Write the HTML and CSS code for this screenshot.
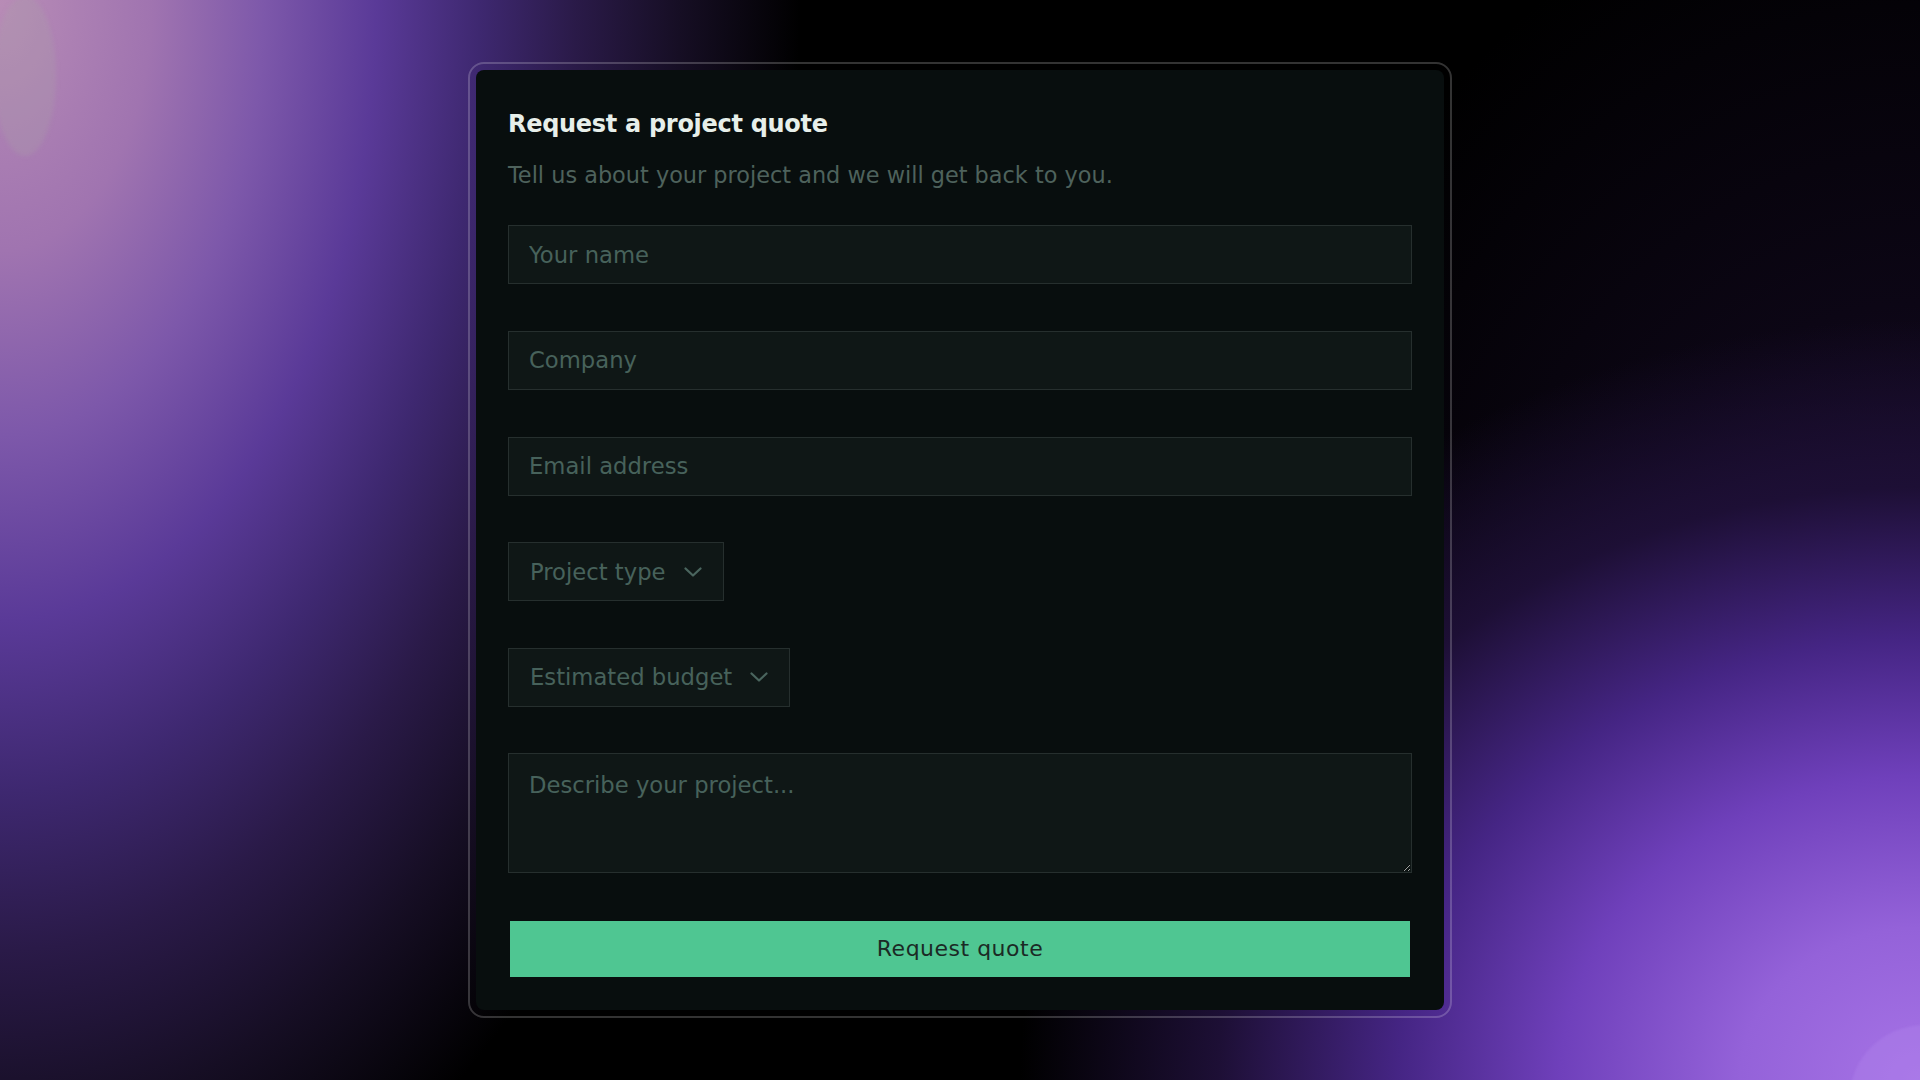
FILE: index.html
```html
<!DOCTYPE html>
<html lang="en">
<head>
<meta charset="utf-8">
<title>Request a project quote</title>
<link rel="stylesheet" href="styles.css">
</head>
<body>
<div class="bg" aria-hidden="true">
  <div class="blob blob-tl"></div>
  <div class="blob blob-br"></div>
</div>
<main class="frame">
  <section class="card">
    <h1 class="title">Request a project quote</h1>
    <p class="subtitle">Tell us about your project and we will get back to you.</p>
    <form class="form">
      <input class="field" type="text" placeholder="Your name">
      <input class="field" type="text" placeholder="Company">
      <input class="field" type="email" placeholder="Email address">
      <div class="select">
        <span>Project type</span>
        <svg class="chev" viewBox="0 0 18 10" width="18" height="10"><path d="M1.5 1.5 9 8.5 16.5 1.5" fill="none" stroke="currentColor" stroke-width="2.2" stroke-linecap="round" stroke-linejoin="round"/></svg>
      </div>
      <div class="select">
        <span>Estimated budget</span>
        <svg class="chev" viewBox="0 0 18 10" width="18" height="10"><path d="M1.5 1.5 9 8.5 16.5 1.5" fill="none" stroke="currentColor" stroke-width="2.2" stroke-linecap="round" stroke-linejoin="round"/></svg>
      </div>
      <textarea class="field area" placeholder="Describe your project..."></textarea>
      <button class="submit" type="button">Request quote</button>
    </form>
  </section>
</main>
</body>
</html>
```

FILE: styles.css
```css
* { box-sizing: border-box; }

html, body { height: 100%; }

body {
  margin: 0;
  height: 100vh;
  display: flex;
  align-items: center;
  justify-content: center;
  overflow: hidden;
  font-family: "DejaVu Sans", "Noto Sans", sans-serif;
  background-color: #000;
  background-image:
    radial-gradient(ellipse 800px 1320px at 0 0,
      #b88cb6 0%, #a074b0 19%, #7d58aa 33%, #5a3a98 47%, #3e2870 60%, #2a1a48 72%, #160e24 85%, rgba(0,0,0,0) 100%),
    radial-gradient(ellipse 900px 760px at 100% 100%,
      #a673e6 0%, #9462d9 20%, #6f40bb 40%, #452584 58%, #1d0f35 78%, rgba(0,0,0,0) 100%),
    radial-gradient(ellipse 700px 900px at 100% 70%,
      rgba(70, 36, 120, 0.45) 0%, rgba(40, 20, 70, 0.3) 50%, rgba(0,0,0,0) 100%);
}

.bg {
  position: fixed;
  inset: 0;
  overflow: hidden;
  pointer-events: none;
}

.blob {
  position: absolute;
  border-radius: 50%;
}

.blob-tl {
  left: -6px;
  top: -4px;
  width: 62px;
  height: 160px;
  background: rgba(170, 160, 170, 0.3);
  filter: blur(2px);
}

.blob-br {
  right: -80px;
  bottom: -90px;
  width: 150px;
  height: 145px;
  background: rgba(175, 130, 235, 0.4);
  filter: blur(1px);
}

.frame {
  position: relative;
  width: 984px;
  padding: 6px;
  border: 2px solid rgba(255, 255, 255, 0.2);
  border-radius: 16px;
}

.card {
  background: #080e0e;
  border-radius: 8px;
  padding: 40px 32px 33px;
}

.title {
  margin: 0;
  font-size: 24px;
  font-weight: 700;
  letter-spacing: -0.3px;
  line-height: 28px;
  color: #e7efea;
}

.subtitle {
  margin: 24.6px 0 37px;
  font-size: 22.4px;
  line-height: 25.6px;
  color: #4e625c;
}

.form {
  display: flex;
  flex-direction: column;
  align-items: flex-start;
  gap: 46.6px;
}

.field {
  display: block;
  width: 100%;
  height: 59px;
  margin: 0;
  padding: 0 20px;
  font-family: inherit;
  font-size: 22.7px;
  color: #cfd8d4;
  background: #0f1716;
  border: 1px solid #262f2e;
  border-radius: 0;
  outline: none;
}

.field::placeholder { color: #47625b; }

.area {
  height: 120px;
  padding: 18px 20px;
  line-height: 26.4px;
  resize: vertical;
}

.select {
  display: flex;
  align-items: center;
  gap: 18px;
  height: 59px;
  padding: 0 21px;
  font-size: 22.7px;
  color: #47625b;
  background: #0f1716;
  border: 1px solid #262f2e;
}

.chev { display: block; color: #4a655e; }

.submit {
  align-self: stretch;
  margin: 1px 2px 0;
  height: 56px;
  font-family: inherit;
  font-size: 22px;
  letter-spacing: 0.5px;
  color: #1b2a25;
  background: #4fc692;
  border: 0;
  border-radius: 0;
  cursor: pointer;
}
```
